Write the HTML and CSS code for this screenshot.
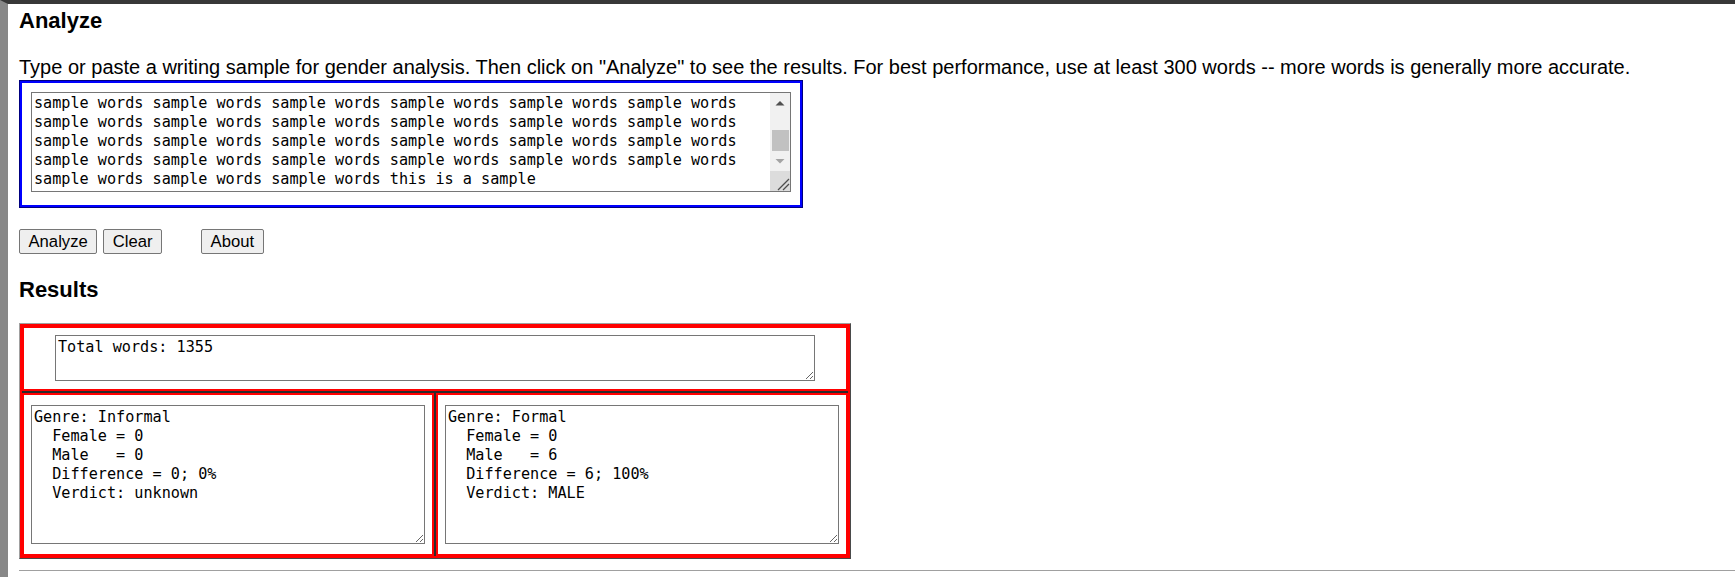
FILE: index.html
```html
<!DOCTYPE html>
<html lang="en">
<head>
<meta charset="utf-8">
<title>Gender Analyzer</title>
<link rel="stylesheet" href="styles.css">
</head>
<body>
<div class="page">
  <main class="content">
    <h2 class="title">Analyze</h2>
    <p class="intro">Type or paste a writing sample for gender analysis. Then click on "Analyze" to see the results. For best performance, use at least 300 words -- more words is generally more accurate.</p>
    <div class="input-frame">
      <div class="sample-wrap">
        <textarea class="sample" spellcheck="false">sample words sample words sample words sample words sample words sample words sample words sample words sample words sample words sample words sample words sample words sample words sample words sample words sample words sample words sample words sample words sample words sample words sample words sample words sample words sample words sample words sample words sample words sample words sample words sample words sample words sample words sample words sample words sample words sample words sample words sample words sample words sample words sample words sample words sample words sample words sample words sample words sample words sample words sample words this is a sample</textarea>
        <div class="scrollbar" aria-hidden="true">
          <div class="sb-btn">
            <svg width="20" height="20" viewBox="0 0 20 20"><path d="M5.5 12.5 L10 8 L14.5 12.5 Z" fill="#505050"/></svg>
          </div>
          <div class="sb-track"><div class="sb-thumb"></div></div>
          <div class="sb-btn">
            <svg width="20" height="20" viewBox="0 0 20 20"><path d="M5.5 8 L10 12.5 L14.5 8 Z" fill="#a3a3a3"/></svg>
          </div>
          <div class="sb-corner">
            <svg width="20" height="20" viewBox="0 0 20 20"><path d="M8 19 L19 8 M13 19 L19 13" stroke="#4d4d4d" stroke-width="1.3" fill="none"/></svg>
          </div>
        </div>
      </div>
    </div>
    <div class="actions">
      <button type="button" class="btn">Analyze</button>
      <button type="button" class="btn">Clear</button>
      <button type="button" class="btn btn-about">About</button>
    </div>
    <h2 class="title results-title">Results</h2>
    <div class="results">
      <div class="cell cell-wide"><textarea class="out out-total" spellcheck="false">Total words: 1355</textarea></div>
      <div class="cell"><textarea class="out out-genre" spellcheck="false">Genre: Informal
  Female = 0
  Male   = 0
  Difference = 0; 0%
  Verdict: unknown</textarea></div>
      <div class="cell"><textarea class="out out-genre" spellcheck="false">Genre: Formal
  Female = 0
  Male   = 6
  Difference = 6; 100%
  Verdict: MALE</textarea></div>
    </div>
    <hr class="rule">
  </main>
</div>
<script src="script.js"></script>
</body>
</html>
```

FILE: styles.css
```css
html, body {
  margin: 0;
  background: #fff;
}
body {
  font-family: "Liberation Sans", Arial, sans-serif;
  color: #000;
}
.page {
  box-sizing: border-box;
  min-height: 577px;
  border-top: 4px solid #383838;
  border-left: 8px solid #888;
  padding-left: 11px;
  overflow: hidden;
}
.title {
  font-size: 22px;
  line-height: 26px;
  font-weight: bold;
  margin: 4px 0 0;
}
.intro {
  font-size: 20px;
  line-height: 23px;
  margin: 22px 0 1px;
  white-space: nowrap;
}
.input-frame {
  box-sizing: border-box;
  width: 784px;
  border: 1px solid #000080;
  box-shadow: inset 0 0 0 2px #0000ff;
  padding: 11px 11px 15px;
}
.sample-wrap {
  position: relative;
  width: 760px;
  height: 100px;
}
.sample {
  display: block;
  box-sizing: border-box;
  width: 760px;
  height: 100px;
  margin: 0;
  padding: 2px 22px 2px 2px;
  border: 1px solid #767676;
  font: 15.17px/19px "DejaVu Sans Mono", monospace;
  color: #000;
  overflow-y: scroll;
  resize: none;
  scrollbar-width: none;
}
.sample::-webkit-scrollbar {
  display: none;
}
.scrollbar {
  position: absolute;
  top: 1px;
  right: 1px;
  bottom: 1px;
  width: 20px;
  display: flex;
  flex-direction: column;
  background: #f1f1f1;
}
.sb-btn {
  height: 20px;
  flex: none;
}
.sb-btn svg,
.sb-corner svg {
  display: block;
}
.sb-track {
  flex: 1;
  display: flex;
  flex-direction: column;
  justify-content: flex-end;
}
.sb-thumb {
  height: 21px;
  margin: 0 1px 0 2px;
  background: #c1c1c1;
}
.sb-corner {
  height: 20px;
  flex: none;
  background: #dcdcdc;
}
.actions {
  display: flex;
  gap: 6px;
  margin-top: 21px;
}
.btn {
  box-sizing: border-box;
  height: 25px;
  padding: 0 8.5px;
  border: 1px solid #767676;
  border-radius: 2px;
  background: #efefef;
  color: #000;
  font: 16.67px "Liberation Sans", Arial, sans-serif;
}
.btn-about {
  margin-left: 33px;
}
.results-title {
  margin-top: 23px;
}
.results {
  box-sizing: border-box;
  width: 832px;
  margin-top: 20px;
  display: grid;
  grid-template-columns: 1fr 1fr;
  gap: 2px;
  padding: 2px;
  background: #2b2b2b;
  box-shadow: inset 0 0 0 2px #ff0000;
  border: 1px solid;
  border-color: #a0a0a0 #4a4a4a #4a4a4a #a0a0a0;
}
.cell {
  background: #fff;
  border: 2px solid #ff0000;
  padding: 10px 7px;
  display: flex;
  justify-content: center;
}
.cell-wide {
  grid-column: 1 / -1;
  padding: 7px 0 8px;
}
.out {
  display: block;
  box-sizing: border-box;
  margin: 0;
  padding: 2px;
  border: 1px solid #767676;
  font: 15.17px/19px "DejaVu Sans Mono", monospace;
  color: #000;
  resize: both;
}
.out-total {
  width: 760px;
  height: 46px;
}
.out-genre {
  width: 394px;
  height: 139px;
}
.rule {
  height: 0;
  border: 0;
  border-top: 1px solid #a0a0a0;
  margin: 11px 0 0;
}
```

FILE: script.js
```js
var sample = document.querySelector('.sample');
if (sample) {
  sample.scrollTop = sample.scrollHeight;
}
```
